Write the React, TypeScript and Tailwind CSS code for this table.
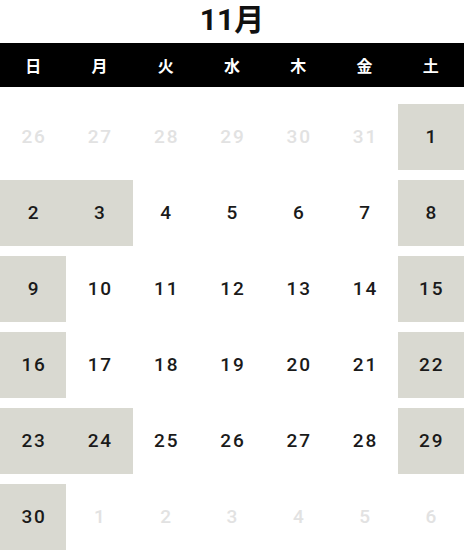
import React from 'react';

const weekDays = ['日', '月', '火', '水', '木', '金', '土'];

type Day = { n: number; muted?: boolean; off?: boolean };

const holidays = [3, 24];

function buildDays(): Day[] {
  const days: Day[] = [];
  [26, 27, 28, 29, 30, 31].forEach(n => days.push({ n, muted: true }));
  for (let n = 1; n <= 30; n++) {
    const col = days.length % 7;
    days.push({ n, off: col === 0 || col === 6 || holidays.includes(n) });
  }
  [1, 2, 3, 4, 5, 6].forEach(n => days.push({ n, muted: true }));
  return days;
}

export default function App() {
  const days = buildDays();

  return (
    <div className="w-[464px] h-[550px] bg-white overflow-hidden font-['Roboto','Noto_Sans_CJK_JP',sans-serif]">
      <h1 className="h-[43px] flex items-center justify-center text-[30px] font-bold leading-none text-[#111] pb-[4px]">
        11月
      </h1>
      <div className="grid grid-cols-7 h-[44px] bg-black">
        {weekDays.map(d => (
          <div key={d} className="flex items-center justify-center text-white text-[16px] font-bold font-['Noto_Sans_CJK_JP',sans-serif]">
            {d}
          </div>
        ))}
      </div>
      <div className="grid grid-cols-7 gap-y-[10px] mt-[17px]">
        {days.map((d, i) => (
          <div
            key={i}
            className={`h-[66px] flex items-center justify-center text-[19px] font-medium tracking-[0.1em] pl-[0.1em] ${
              d.muted ? 'text-[#e2e2e2]' : 'text-[#1a1a1a]'
            } ${d.off ? 'bg-[#d9d9d1]' : ''}`}
          >
            {d.n}
          </div>
        ))}
      </div>
    </div>
  );
}
